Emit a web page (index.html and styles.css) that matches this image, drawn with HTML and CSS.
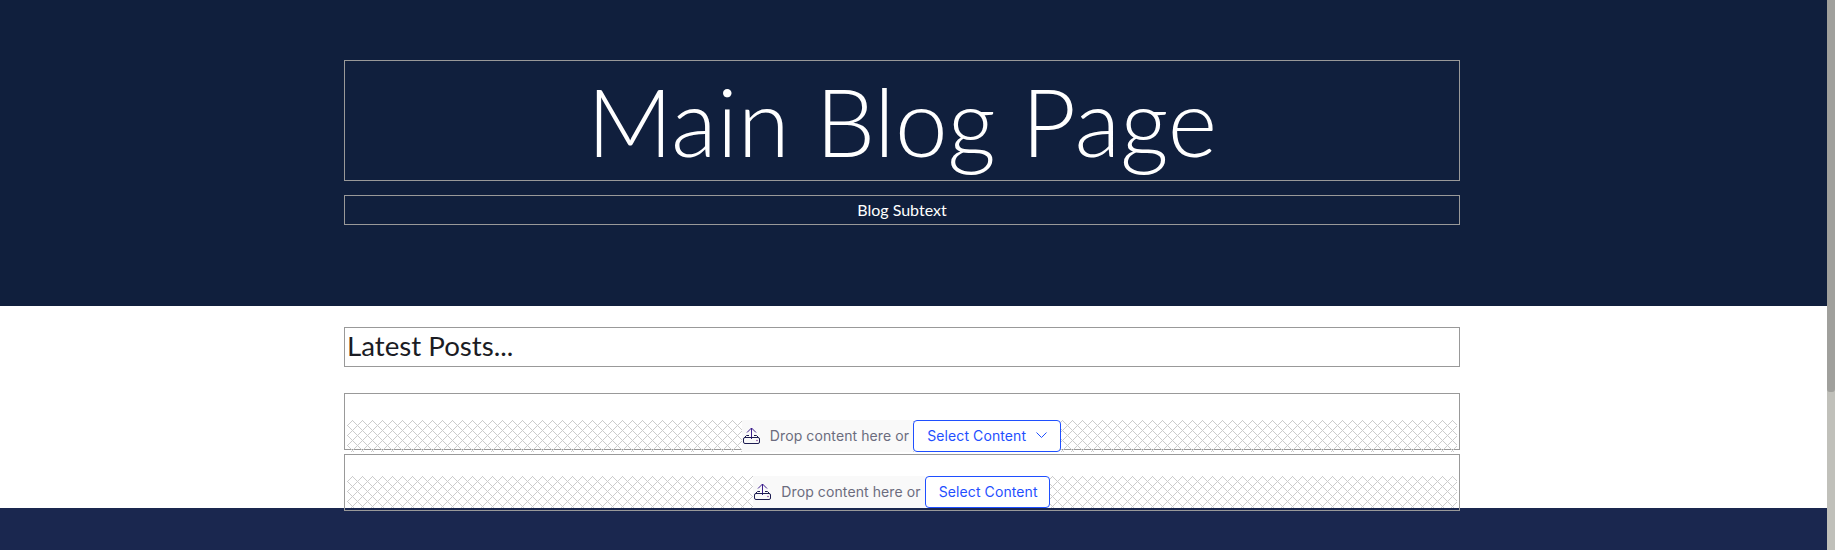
FILE: index.html
```html
<!DOCTYPE html>
<html lang="en">
<head>
  <meta charset="UTF-8" />
  <title>Main Blog Page</title>
  <link rel="stylesheet" href="styles.css">
</head>
<body>

  <div class="page">
    <header>
      <div class="container">
        <h1 class="blog-title">Main Blog Page</h1>
        <p class="blog-subtext">Blog Subtext</p>
      </div>
    </header>

    <main>
      <div class="container">
        <h2 class="latest-title">Latest Posts...</h2>

        <!-- Empty content slots -->
        <div class="slot">
          <div class="drop-zone">
            <div class="drop-message">
              <svg class="drop-icon" viewBox="0 0 17 17" fill="none">
                <path d="M8.5 12V1M4 5.500 8.500 1 13 5.500" stroke="#3a1c8b" stroke-width="1"/>
                <path d="M6 8.500H3.500L1.500 10.500M11 8.500h2.500l2 2" stroke="#1c1c50" stroke-width="1"/>
                <rect x=".5" y="10.500" width="16" height="6" rx="1.500" stroke="#1c1c50" stroke-width="1"/>
                <circle cx="14" cy="13.500" r=".8" fill="#8a4a9c"/>
              </svg>
              <span>Drop content here or</span>
            </div>
            <button class="select-btn">
              Select Content
              <svg class="chevron" viewBox="0 0 11 6" fill="none"><path d="M.5.5 5.500 5.500 10.500.5" stroke="#1f4fff" stroke-width="1"/></svg>
            </button>
          </div>
        </div>

        <div class="slot slot-next">
          <div class="drop-zone">
            <div class="drop-message">
              <svg class="drop-icon" viewBox="0 0 17 17" fill="none">
                <path d="M8.5 12V1M4 5.500 8.500 1 13 5.500" stroke="#3a1c8b" stroke-width="1"/>
                <path d="M6 8.500H3.500L1.500 10.500M11 8.500h2.500l2 2" stroke="#1c1c50" stroke-width="1"/>
                <rect x=".5" y="10.500" width="16" height="6" rx="1.500" stroke="#1c1c50" stroke-width="1"/>
                <circle cx="14" cy="13.500" r=".8" fill="#8a4a9c"/>
              </svg>
              <span>Drop content here or</span>
            </div>
            <button class="select-btn">Select Content</button>
          </div>
        </div>
      </div>
    </main>

    <footer></footer>
  </div>

  <div class="scrollbar"><div class="scrollbar-thumb"></div></div>

</body>
</html>
```

FILE: styles.css
```css
* { box-sizing: border-box; }

html, body {
  height: 550px;
  overflow: hidden;
}

body {
  margin: 0;
  display: flex;
  font-family: 'Lato', sans-serif;
  background-color: white;
}

.page {
  flex-grow: 1;
  height: 550px;
  overflow: hidden;
}

.container {
  width: 1116px;
  margin-left: 344px;
}

header {
  background-color: #101f3d;
  height: 306px;
  padding-top: 60px;
}

.blog-title {
  margin: 0;
  height: 121px;
  border: 1px solid #999;
  font-size: 94.5px;
  font-weight: 300;
  line-height: 119px;
  text-align: center;
  color: white;
}

.blog-subtext {
  margin: 14px 0 0;
  height: 30px;
  border: 1px solid #999;
  font-size: 16px;
  line-height: 28px;
  text-align: center;
  color: white;
}

main {
  position: relative;
  padding-top: 21px;
  margin-bottom: -3px;
}

.latest-title {
  margin: 0 0 26px;
  height: 40px;
  padding-left: 2px;
  border: 1px solid #999;
  font-size: 27.7px;
  font-weight: 400;
  line-height: 36px;
  color: #1b1c24;
}

.slot {
  height: 57px;
  padding: 26px 2px 0;
  border: 1px solid #999;
}

.slot-next {
  margin-top: 4px;
  padding-top: 21px;
}

.drop-zone {
  display: flex;
  justify-content: center;
  height: 32px;
  padding-right: 1px;
  background-image: url("data:image/svg+xml,%3Csvg xmlns='http://www.w3.org/2000/svg' width='10' height='10' shape-rendering='crispEdges'%3E%3Cpath fill='%23ccc' d='M5 0h1v1H5zM6 1h1v1H6zM4 1h1v1H4zM7 2h1v1H7zM3 2h1v1H3zM8 3h1v1H8zM2 3h1v1H2zM9 4h1v1H9zM1 4h1v1H1zM0 5h1v1H0zM1 6h1v1H1zM9 6h1v1H9zM2 7h1v1H2zM8 7h1v1H8zM3 8h1v1H3zM7 8h1v1H7zM4 9h1v1H4zM6 9h1v1H6z'/%3E%3C/svg%3E");
  background-size: 10px 10px;
  font-family: 'Inter', sans-serif;
  font-size: 14px;
  letter-spacing: .1px;
}

.drop-message {
  display: flex;
  align-items: center;
  gap: 10px;
  padding: 0 4px 2px 1px;
  background-color: #f9f9f9;
  color: #6b6c7e;
}

.drop-icon {
  width: 17px;
  height: 17px;
}

.select-btn {
  display: flex;
  align-items: center;
  gap: 10px;
  padding: 0 11px 2px 13px;
  border: 1px solid #1f4fff;
  border-radius: 4px;
  background-color: white;
  color: #1f4fff;
  font-family: inherit;
  font-size: 14px;
  letter-spacing: inherit;
}

.chevron {
  width: 11px;
  height: 6px;
  margin-right: 2px;
}

footer {
  background-color: #1a274f;
  height: 100px;
}

.scrollbar {
  flex: 0 0 8px;
  height: 550px;
  background-color: #c0c0ba;
}

.scrollbar-thumb {
  height: 392px;
  background-color: #a0a09c;
  border-radius: 0 0 3px 3px;
}
```
